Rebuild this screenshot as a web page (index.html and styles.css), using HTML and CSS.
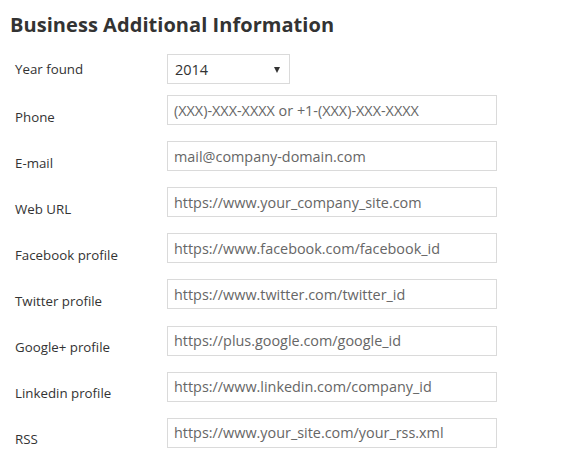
FILE: index.html
```html
<!DOCTYPE html>
<html>
<head>
<meta charset="utf-8">
<link rel="stylesheet" href="styles.css">
</head>
<body>
<div class="page">
  <h2 class="title">Business Additional Information</h2>
  <form class="form">
    <label class="lbl lbl-first">Year found</label>
    <div class="select-wrap">
      <select class="select"><option>2014</option></select>
    </div>
    <label class="lbl">Phone</label>
    <input class="field" type="text" placeholder="(XXX)-XXX-XXXX or +1-(XXX)-XXX-XXXX">
    <label class="lbl">E-mail</label>
    <input class="field" type="text" placeholder="mail@company-domain.com">
    <label class="lbl">Web URL</label>
    <input class="field" type="text" placeholder="https://www.your_company_site.com">
    <label class="lbl">Facebook profile</label>
    <input class="field" type="text" placeholder="https://www.facebook.com/facebook_id">
    <label class="lbl">Twitter profile</label>
    <input class="field" type="text" placeholder="https://www.twitter.com/twitter_id">
    <label class="lbl">Google+ profile</label>
    <input class="field" type="text" placeholder="https://plus.google.com/google_id">
    <label class="lbl">Linkedin profile</label>
    <input class="field" type="text" placeholder="https://www.linkedin.com/company_id">
    <label class="lbl">RSS</label>
    <input class="field" type="text" placeholder="https://www.your_site.com/your_rss.xml">
  </form>
</div>
</body>
</html>
```
FILE: styles.css
```css
html, body {
  margin: 0;
  padding: 0;
  background: #fff;
}
.page {
  padding: 0 0 0 10px;
  font-family: "Open Sans", "Noto Sans", sans-serif;
  color: #333;
}
.title {
  margin: 0;
  padding-top: 11px;
  font-size: 20px;
  line-height: 28px;
  font-weight: 700;
  color: #333;
  letter-spacing: 0.05px;
}
.form {
  display: grid;
  grid-template-columns: 152px 330px;
  row-gap: 16.1px;
  margin-top: 15px;
  padding-left: 5px;
}
.lbl {
  font-size: 13.3px;
  line-height: 16px;
  padding-top: 13.5px;
  color: #333;
}
.lbl-first {
  padding-top: 7px;
}
.select-wrap {
  position: relative;
  width: 123px;
  height: 30px;
  margin-bottom: -5px;
}
.select-wrap::after {
  content: "";
  position: absolute;
  right: 10px;
  top: 13px;
  border-left: 3.5px solid transparent;
  border-right: 3.5px solid transparent;
  border-top: 6px solid #333;
  pointer-events: none;
}
.select {
  -webkit-appearance: none;
  appearance: none;
  width: 123px;
  height: 30px;
  box-sizing: border-box;
  border: 1px solid #dadada;
  border-radius: 0;
  background: #fff;
  font-family: "Open Sans", "Noto Sans", sans-serif;
  font-size: 14.5px;
  color: #333;
  padding: 0 0 0 7px;
  margin: 0;
}
.field {
  width: 330px;
  height: 30px;
  box-sizing: border-box;
  border: 1px solid #dadada;
  border-radius: 0;
  margin: 0;
  padding: 0 0 0 6px;
  font-family: "Open Sans", "Noto Sans", sans-serif;
  font-size: 14.4px;
  color: #555;
  background: #fff;
}
.field::placeholder {
  color: #666;
  opacity: 1;
}
```
